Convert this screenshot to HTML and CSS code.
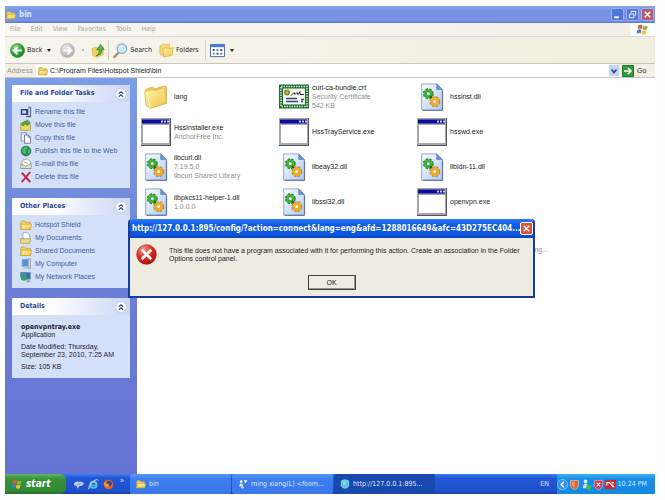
FILE: index.html
```html
<!DOCTYPE html>
<html lang="en">
<head>
<meta charset="utf-8">
<title>bin</title>
<link rel="stylesheet" href="styles.css">
</head>
<body>
<svg class="sprite" aria-hidden="true">
  <defs>
    <linearGradient id="gFold" x1="0" y1="0" x2="1" y2="1"><stop offset="0" stop-color="#fff6a8"/><stop offset="1" stop-color="#eec54a"/></linearGradient>
    <linearGradient id="gPage" x1="0" y1="0" x2="1" y2="1"><stop offset="0" stop-color="#ffffff"/><stop offset="1" stop-color="#a9c9f4"/></linearGradient>
    <radialGradient id="gGreen" cx=".35" cy=".3" r=".8"><stop offset="0" stop-color="#8fe08a"/><stop offset=".5" stop-color="#35a83a"/><stop offset="1" stop-color="#157a1e"/></radialGradient>
    <radialGradient id="gGray" cx=".35" cy=".3" r=".8"><stop offset="0" stop-color="#e8e8e6"/><stop offset="1" stop-color="#a9a9a8"/></radialGradient>
    <radialGradient id="gRed" cx=".35" cy=".25" r=".85"><stop offset="0" stop-color="#f79a86"/><stop offset=".5" stop-color="#da2c20"/><stop offset="1" stop-color="#a30f0f"/></radialGradient>
  </defs>
  <symbol id="folder" viewBox="0 0 16 16"><path d="M1 4.500 2 2.500h4.500l1.500 2h6v9.500H1z" fill="#f3cf5b" stroke="#c39a35" stroke-width=".9"/><path d="M2.500 7h13l-1.500 7H1z" fill="url(#gFold)" stroke="#c9a03a" stroke-width=".9"/></symbol>
  <symbol id="folder-big" viewBox="0 0 26 26"><path d="M2 6 9 3l3 2 10-3 2 1v17L8 25l-5-3z" fill="#efcb63" stroke="#d3a93e" stroke-width=".8"/><path d="M1 8l8-2 3 1 9-3 1 1 2 15L7 25l-4-2z" fill="url(#gFold)" stroke="#dbb54d" stroke-width=".7"/><path d="M1 8l3 2 3 15" fill="none" stroke="#fffbd6" stroke-width=".8"/></symbol>
  <symbol id="exe" viewBox="0 0 30 28"><path d="M0 0h30v28H0z" fill="#55555a"/><path d="M0 0h29v27H0z" fill="#a6a7ad"/><path d="M1 1.500h27v4H1z" fill="#0a0a9c"/><path d="M2 7h26v18H2z" fill="#fff"/><path d="M20 2.500h2v2h-2zM23 2.500h2v2h-2zM26 2.500h2v2h-2z" fill="#c9c9e8"/></symbol>
  <symbol id="dll" viewBox="0 0 24 30"><path d="M1 1h16l6 6v22H1z" fill="url(#gPage)" stroke="#8aa2c9"/><path d="M2 29.300h21.400V8" fill="none" stroke="#53698f"/><path d="M17 1v6h6z" fill="#5f95dc" stroke="#55759f" stroke-width=".6"/><circle cx="8" cy="11.500" r="4" fill="none" stroke="#257f24" stroke-width="3.600" stroke-dasharray="2.200 1"/><circle cx="8" cy="11.500" r="3.200" fill="none" stroke="#3fae3b" stroke-width="3.200"/><circle cx="8" cy="11.500" r="1.200" fill="#d9f3dc"/><path d="m10 14 3 3" stroke="#1d5a20" stroke-width="2"/><circle cx="15" cy="20" r="4" fill="none" stroke="#b97c20" stroke-width="3.600" stroke-dasharray="2.200 1"/><circle cx="15" cy="20" r="3.400" fill="none" stroke="#eeaa2a" stroke-width="3.200"/><circle cx="15" cy="20" r="1.400" fill="#fdf0cf"/></symbol>
  <symbol id="cert" viewBox="0 0 30 24"><path d="M0 0h30v24H0z" fill="#1f6b32"/><path d="M2 2h26v20H2z" fill="none" stroke="#cfe8cc" stroke-width="1.600" stroke-dasharray="1.500 1"/><path d="M4 4h22v16H4z" fill="#f6f9ea"/><circle cx="8" cy="8" r="3" fill="#8f8a33"/><circle cx="8" cy="8" r="1.200" fill="#c7bb5d"/><path d="M12 11l3-3 1 2 2-2 1 2 2-3v3h4" fill="none" stroke="#26304d" stroke-width="1"/><path d="M7 14h11M7 17h12M22 15h3M22 17h2" stroke="#3a3f86" stroke-width="1.300"/></symbol>
  <symbol id="chev" viewBox="0 0 12 12"><circle cx="6" cy="6" r="5.500" fill="#fff" stroke="#bcc8ec" stroke-width=".8"/><path d="m3.800 5.700 2.200-2 2.200 2M3.800 8.700l2.200-2 2.200 2" fill="none" stroke="#3c4f92" stroke-width="1.200"/></symbol>
  <symbol id="flag" viewBox="0 0 16 16"><path d="M3 3q2.500-2 5 0L7 7.500Q4.500 6 2 7.500z" fill="#e5562a"/><path d="M9 3.300q2.500 1.500 5.500 0L13.200 8Q10.500 9.300 8 7.700z" fill="#7fb93a"/><path d="M1.700 8.500q2.500-1.800 5 0L5.500 13Q3 11.500.5 13z" fill="#3f7fd6"/><path d="M7.700 8.800q2.500 1.500 5.200.2l-1.300 4.500Q9 15 6.500 13.300z" fill="#f4c22f"/></symbol>
  <symbol id="back" viewBox="0 0 16 16"><circle cx="8" cy="8" r="7.500" fill="url(#gGreen)" stroke="#2d8a33" stroke-width=".6"/><path d="M12.500 8H4.500M8 4 4 8l4 4" fill="none" stroke="#fff" stroke-width="2.200"/></symbol>
  <symbol id="fwd" viewBox="0 0 16 16"><circle cx="8" cy="8" r="7.500" fill="url(#gGray)" stroke="#a2a2a0" stroke-width=".6"/><path d="M3.500 8h8M8 4l4 4-4 4" fill="none" stroke="#fafafa" stroke-width="2.200"/></symbol>
  <symbol id="up" viewBox="0 0 16 16"><path d="M1 6 5 4l2 1 7-1v9l-8 3-4-2z" fill="#f3d25e" stroke="#d6b653" stroke-width=".8"/><path d="M6 14q4-2 3.500-7H6.500L11 1l4 6h-2.500q0 6-6.500 7z" fill="#4cb848" stroke="#217a26" stroke-width=".8"/></symbol>
  <symbol id="search" viewBox="0 0 16 16"><path d="m6.500 9.500-5 5.500" stroke="#a88d74" stroke-width="2.400" stroke-linecap="round"/><circle cx="9.500" cy="6" r="5" fill="#c9ebfa" stroke="#82aecb" stroke-width="1.400"/><path d="M6.500 5.500q1-2.500 3.500-2.500" stroke="#fff" stroke-width="1.300" fill="none"/></symbol>
  <symbol id="folders" viewBox="0 0 16 16"><path d="M1 3 5 1l2 1 4-1v9l-8 3-2-1z" fill="#f6d975" stroke="#dcb95a" stroke-width=".8"/><path d="m4 6 4-1 2 1 5-1-1 8-9 2z" fill="url(#gFold)" stroke="#d3ad4a" stroke-width=".8"/></symbol>
  <symbol id="views" viewBox="0 0 16 14"><path d="M.5.500h15v13H.5z" fill="#fff" stroke="#3f66b5"/><path d="M1 1h14v2.500H1z" fill="#4d7bd6"/><path d="M3 5.500h2v2H3zM11 5.500h2v2h-2zM7 9.500h2v2H7z" fill="#284b99"/><path d="M7 5.500h2v2H7zM3 9.500h2v2H3z" fill="#4e9a57"/><path d="M11 9.500h2v2h-2z" fill="#8b5a9c"/></symbol>
  <symbol id="rename" viewBox="0 0 16 16"><path d="M1 4h10v8H1z" fill="#31457c"/><path d="M3 6h5v4H3z" fill="#d6e2fb"/><path d="M11 2h3v12h-4" fill="none" stroke="#6e7796" stroke-width="1.800"/><path d="M8 14h6" stroke="#49588b" stroke-width="1.500"/></symbol>
  <symbol id="move" viewBox="0 0 16 16"><path d="M1 5h5l1 2h7v8H1z" fill="#f0d766" stroke="#94852f" stroke-width=".8"/><path d="M2 8q2-6 7-5V1l5 4-5 4V6Q6 6 5 9z" fill="#55a83d" stroke="#2b7425" stroke-width=".7"/></symbol>
  <symbol id="copy" viewBox="0 0 16 16"><path d="M1.500 1h7v11h-7z" fill="#e7f0ff" stroke="#6d7da6"/><path d="M6 4h5l3 3v8H6z" fill="#fff" stroke="#4d5d88"/><path d="M11 4v3h3" fill="none" stroke="#4d5d88"/></symbol>
  <symbol id="globe" viewBox="0 0 16 16"><circle cx="8" cy="8" r="6.500" fill="#2e8b72" stroke="#266056"/><path d="M3 6q2-4 6-4l1 3-3 2 1 3-2 2Q3 10 3 6zM11 6l3 1-1 4-2 1z" fill="#45c14a"/></symbol>
  <symbol id="mail" viewBox="0 0 16 16"><path d="M3 3 10 1l4 4v9H2z" fill="#f6f7ee" stroke="#8c9585"/><path d="m1 8 7 3 7-4v7H1z" fill="#d7e2d2" stroke="#71836f" stroke-width=".8"/><path d="m5 5 5 2" stroke="#b79b58"/></symbol>
  <symbol id="delete" viewBox="0 0 16 16"><path d="m3 3 10 11M13 2 3 14" stroke="#c5244b" stroke-width="2.600" stroke-linecap="round"/></symbol>
  <symbol id="docs" viewBox="0 0 16 16"><path d="M4 1h6l3 3v8H4z" fill="#fff" stroke="#8a96a8"/><path d="M1 9h13l-1 6H1z" fill="#efdc8a" stroke="#a8924b"/></symbol>
  <symbol id="pc" viewBox="0 0 16 16"><path d="M3 2h8v9H3z" fill="#4f93d8" stroke="#8797ac"/><path d="M11 1h3v13h-3z" fill="#c9d2de" stroke="#75849c" stroke-width=".7"/><path d="M4 14h8l-2-3H6z" fill="#b2bdcc"/></symbol>
  <symbol id="net" viewBox="0 0 16 16"><path d="M1 2h7v6H1z" fill="#3c8ccc" stroke="#57718e"/><path d="M7 2h7v9H7z" fill="#2d70bb" stroke="#8796a8"/><circle cx="5" cy="9" r="4" fill="#33a16a"/><path d="M8 15h6l-1-3H9z" fill="#9dacc0"/></symbol>
  <symbol id="error" viewBox="0 0 22 22"><circle cx="11" cy="11" r="10.300" fill="url(#gRed)" stroke="#a01512" stroke-width=".6"/><path d="m7 7 8 8M15 7l-8 8" stroke="#fff" stroke-width="2.800" stroke-linecap="square"/></symbol>
  <symbol id="cross" viewBox="0 0 12 12"><path d="m3 3 6 6M9 3 3 9" stroke="#fff" stroke-width="1.700"/></symbol>
  <symbol id="bird" viewBox="0 0 16 16"><path d="M1 7q3-4 6-3l6 0 3 3-3 3H9l-2 4-2-4-3-1z" fill="#b9cbe9"/><path d="m6 8 6-1" stroke="#7f8ca8"/></symbol>
  <symbol id="ie" viewBox="0 0 16 16"><circle cx="8" cy="8.500" r="4.500" fill="none" stroke="#5cc8f4" stroke-width="2.600"/><path d="M4 9h9" stroke="#5cc8f4" stroke-width="2"/><path d="M1 15Q0 9 7 4t8-2" fill="none" stroke="#f2ddb0" stroke-width="1.400"/></symbol>
  <symbol id="fox" viewBox="0 0 16 16"><circle cx="8" cy="8" r="7" fill="#e5671d"/><circle cx="9" cy="6.500" r="4" fill="#3f4c8e"/><path d="M1 5q3-1 4 2 3 0 4 2-1 3-5 2-3-2-3-6z" fill="#f79a2a"/></symbol>
  <symbol id="people" viewBox="0 0 16 16"><circle cx="5" cy="4" r="2.200" fill="#fff"/><path d="M2 12q0-5 3-5t3 5z" fill="#dbe8ff"/><path d="M9 2h6l-3 5z" fill="#fff"/><circle cx="7" cy="13" r="2" fill="#c5dfff"/></symbol>
  <symbol id="hss" viewBox="0 0 16 16"><path d="M2 3q6-4 12 0v8q-1 3-6 4-5-1-6-4z" fill="#58c5dc" stroke="#a9e5ef"/><path d="M5 5h5M5 8h4" stroke="#e8fbff"/></symbol>
</svg>

<div class="screen">
  <main class="window">
    <header class="titlebar">
      <svg class="ic10"><use href="#folder"/></svg>
      <h1>bin</h1>
      <div class="winbtns">
        <button aria-label="Minimize"><svg viewBox="0 0 12 12"><path d="M2.500 9h5" stroke="#fff" stroke-width="2"/></svg></button>
        <button aria-label="Restore"><svg viewBox="0 0 12 12"><path d="M4.500 4V2.500h5v4H8M2.500 5.500h5v4h-5z" fill="none" stroke="#fff"/></svg></button>
        <button class="close" aria-label="Close"><svg><use href="#cross"/></svg></button>
      </div>
    </header>

    <nav class="menubar">
      <button>File</button><button>Edit</button><button>View</button><button>Favorites</button><button>Tools</button><button>Help</button>
      <span class="brand"><svg><use href="#flag"/></svg></span>
    </nav>

    <div class="toolbar">
      <button class="tool back"><svg><use href="#back"/></svg>Back<i class="arrow"></i></button>
      <button class="tool fwd" aria-label="Forward"><svg><use href="#fwd"/></svg><i class="dot"></i></button>
      <button class="tool up" aria-label="Up"><svg><use href="#up"/></svg></button>
      <span class="sep"></span>
      <button class="tool"><svg><use href="#search"/></svg>Search</button>
      <button class="tool folders"><svg><use href="#folders"/></svg>Folders</button>
      <span class="sep"></span>
      <button class="tool" aria-label="Views"><svg><use href="#views"/></svg><i class="arrow"></i></button>
    </div>

    <form class="address">
      <label for="path">Address</label>
      <div class="field">
        <svg class="ic10"><use href="#folder"/></svg>
        <input id="path" type="text" value="C:\Program Files\Hotspot Shield\bin">
        <button type="button" class="drop" aria-label="History"><svg viewBox="0 0 10 10"><path d="m2.500 3.500 2.500 3 2.500-3" fill="none" stroke="#33426f" stroke-width="1.600"/></svg></button>
      </div>
      <button type="button" class="go"><svg viewBox="0 0 12 12"><path d="M.500.500h11v11H.500z" fill="#349a3c" stroke="#1c7b2a"/><path d="M2 6h7M6 3l3 3-3 3" fill="none" stroke="#fff" stroke-width="1.600"/></svg>Go</button>
    </form>

    <div class="content">
      <aside class="side">
        <section class="panel">
          <header><h2>File and Folder Tasks</h2><button aria-label="Collapse"><svg><use href="#chev"/></svg></button></header>
          <ul>
            <li><a href="#"><svg><use href="#rename"/></svg>Rename this file</a></li>
            <li><a href="#"><svg><use href="#move"/></svg>Move this file</a></li>
            <li><a href="#"><svg><use href="#copy"/></svg>Copy this file</a></li>
            <li><a href="#"><svg><use href="#globe"/></svg>Publish this file to the Web</a></li>
            <li><a href="#"><svg><use href="#mail"/></svg>E-mail this file</a></li>
            <li><a href="#"><svg><use href="#delete"/></svg>Delete this file</a></li>
          </ul>
        </section>
        <section class="panel">
          <header><h2>Other Places</h2><button aria-label="Collapse"><svg><use href="#chev"/></svg></button></header>
          <ul>
            <li><a href="#"><svg><use href="#folder"/></svg>Hotspot Shield</a></li>
            <li><a href="#"><svg><use href="#docs"/></svg>My Documents</a></li>
            <li><a href="#"><svg><use href="#folder"/></svg>Shared Documents</a></li>
            <li><a href="#"><svg><use href="#pc"/></svg>My Computer</a></li>
            <li><a href="#"><svg><use href="#net"/></svg>My Network Places</a></li>
          </ul>
        </section>
        <section class="panel">
          <header><h2>Details</h2><button aria-label="Collapse"><svg><use href="#chev"/></svg></button></header>
          <div class="details">
            <p><strong>openvpntray.exe</strong><br>Application</p>
            <p>Date Modified: Thursday,<br>September 23, 2010, 7:25 AM</p>
            <p>Size: 105 KB</p>
          </div>
        </section>
      </aside>

      <div class="files">
        <div class="file"><svg class="fold"><use href="#folder-big"/></svg><p>lang</p></div>
        <div class="file"><svg class="cert"><use href="#cert"/></svg><p>curl-ca-bundle.crt<small>Security Certificate</small><small>542 KB</small></p></div>
        <div class="file"><svg><use href="#dll"/></svg><p>hssinst.dll</p></div>
        <div class="file"><svg><use href="#exe"/></svg><p>HssInstaller.exe<small>AnchorFree Inc.</small></p></div>
        <div class="file"><svg><use href="#exe"/></svg><p>HssTrayService.exe</p></div>
        <div class="file"><svg><use href="#exe"/></svg><p>hsswd.exe</p></div>
        <div class="file"><svg><use href="#dll"/></svg><p>libcurl.dll<small>7.19.5.0</small><small>libcurl Shared Library</small></p></div>
        <div class="file"><svg><use href="#dll"/></svg><p>libeay32.dll</p></div>
        <div class="file"><svg><use href="#dll"/></svg><p>libidn-11.dll</p></div>
        <div class="file"><svg><use href="#dll"/></svg><p>libpkcs11-helper-1.dll<small>1.0.0.0</small></p></div>
        <div class="file"><svg><use href="#dll"/></svg><p>libssl32.dll</p></div>
        <div class="file"><svg><use href="#exe"/></svg><p>openvpn.exe</p></div>
        <div class="file tail"><p><small>ng...</small></p></div>
      </div>
    </div>
  </main>

  <div class="dialog" role="alertdialog" aria-labelledby="dlg-title">
    <header><h2 id="dlg-title">http://127.0.0.1:895/config/?action=connect&amp;lang=eng&amp;afd=1288016649&amp;afc=43D275EC404...</h2><button class="close" aria-label="Close"><svg><use href="#cross"/></svg></button></header>
    <div class="message"><svg><use href="#error"/></svg><p>This file does not have a program associated with it for performing this action. Create an association in the Folder<br>Options control panel.</p></div>
    <button class="ok">OK</button>
  </div>

  <footer class="taskbar">
    <button class="start"><svg><use href="#flag"/></svg>start</button>
    <div class="quick">
      <button aria-label="Messenger"><svg><use href="#bird"/></svg></button>
      <button aria-label="Internet Explorer"><svg><use href="#ie"/></svg></button>
      <button aria-label="Firefox"><svg><use href="#fox"/></svg></button>
      <span>»</span>
    </div>
    <button class="task"><svg><use href="#folder"/></svg>bin</button>
    <button class="task"><svg><use href="#people"/></svg>ming xiang(L) &lt;foom...</button>
    <button class="task active"><svg><use href="#hss"/></svg>http://127.0.0.1:895...</button>
    <span class="lang">EN</span>
    <div class="tray">
      <svg viewBox="0 0 12 12"><circle cx="6" cy="6" r="5.500" fill="#2f8fe8" stroke="#9bd0ff" stroke-width=".8"/><path d="M7.500 3 4.500 6l3 3" fill="none" stroke="#fff" stroke-width="1.700"/></svg>
      <svg viewBox="0 0 12 12"><path d="M1.500 1.500h9V6q0 4-4.500 5.500Q1.500 10 1.500 6z" fill="#d9663c" stroke="#f0c4aa" stroke-width=".8"/><path d="M3 3h3v6Q3 8 3 5z" fill="#f09a70"/></svg>
      <svg viewBox="0 0 12 12"><circle cx="5" cy="2.500" r="2" fill="#e6f4ff"/><path d="M2 10q0-5 3-5t3 5z" fill="#c2e4fb"/><circle cx="8.500" cy="9" r="2.800" fill="#4db83c"/></svg>
      <svg viewBox="0 0 12 12"><path d="M1.500 1.500h9V6q0 4-4.500 5.500Q1.500 10 1.500 6z" fill="#d8303c" stroke="#efb0b6" stroke-width=".8"/><path d="m4 4 4 4M8 4 4 8" stroke="#fff" stroke-width="1.200"/></svg>
      <svg viewBox="0 0 12 12"><path d="M0 1h12v10H0z" fill="#cf2a2a"/><path d="M2 7V4h3l4 5M7 4h3M8 6l2 3" fill="none" stroke="#fff" stroke-width="1.200"/></svg>
      <time>10:24 PM</time>
    </div>
  </footer>
</div>
</body>
</html>
```
FILE: styles.css
```css
* { box-sizing: border-box; }

body {
  margin: 0;
  background: #fefefe;
  color: #222;
  font: 7px/9px "Liberation Sans", Arial, sans-serif;
}

h1, h2, p, ul { margin: 0; padding: 0; }
ul { list-style: none; }
a { color: inherit; text-decoration: none; }
svg { display: block; flex: none; }
.sprite { position: absolute; width: 0; height: 0; }

button, input {
  margin: 0;
  padding: 0;
  border: 0;
  background: none;
  color: inherit;
  font: inherit;
}

.screen {
  position: relative;
  display: flex;
  flex-direction: column;
  min-height: 100vh;
  padding: 6px 10px 6px 5px;
}

.window { display: flex; flex: 1; flex-direction: column; }

.ic10 { width: 10px; height: 10px; }

.titlebar {
  display: flex;
  align-items: center;
  height: 17px;
  padding: 0 1px;
  gap: 3px;
  background: linear-gradient(#86a7ee, #7592e2 30%, #7795e4 85%, #5f78c4);
}
.titlebar h1 { flex: 1; color: #dfe8fc; font: bold 8px/12px "DejaVu Sans Condensed", sans-serif; }
.winbtns { display: flex; gap: 2px; }
.winbtns button { width: 13px; height: 13px; border: 1px solid #9db2ee; border-radius: 2px; background: #5076dc; }
.winbtns svg { width: 11px; height: 11px; }
.winbtns .close { background: #b9586c; }

.menubar {
  display: flex;
  height: 14px;
  padding-left: 5px;
  gap: 10px;
  border-bottom: 1px solid #dcd9d0;
  background: linear-gradient(90deg, #f7f6f0, #f6f0ea 70%, #f2eee4);
  color: #aaa8a3;
}
.brand { display: flex; justify-content: center; width: 25px; margin-left: auto; background: #fff; }
.brand svg { width: 13px; height: 13px; }

.menubar, .toolbar { font: 7px/9px "DejaVu Sans Condensed", sans-serif; }

.toolbar {
  display: flex;
  align-items: center;
  height: 27px;
  padding-left: 5px;
  border-bottom: 1px solid #c8c6bf;
  background: linear-gradient(90deg, #f6f4ec, #f2eedf);
}
.tool { display: flex; align-items: center; gap: 2px; }
.tool svg { width: 15px; height: 15px; }
.tool.back { margin-right: 9px; }
.tool.fwd { gap: 7px; margin-right: 7px; }
.tool.up svg { width: 14px; }
.tool.folders { margin: 0 3px 0 7px; }
.arrow { margin-left: 3px; border: 2px solid transparent; border-top: 3px solid #222; border-bottom: 0; }
.dot { width: 2px; height: 2px; background: #bbb; }
.sep { width: 1px; height: 20px; margin: 0 4px 0 3px; background: #d3d0c5; }

.address { display: flex; align-items: center; height: 14px; border-bottom: 1px solid #c8c6bf; background: #f2efe4; }
.address label { width: 31px; padding-left: 2px; color: #999791; }
.field { display: flex; flex: 1; align-items: center; height: 13px; padding-left: 2px; gap: 2px; background: #fff; }
.field input { flex: 1; min-width: 0; height: 11px; outline: 0; }
.drop { width: 10px; height: 11px; background: #c5d3f8; }
.drop svg { width: 10px; height: 10px; }
.go { display: flex; align-items: center; width: 36px; padding-left: 3px; gap: 3px; }
.go svg { width: 12px; height: 12px; }

.content { display: flex; flex: 1; }

.side {
  display: flex;
  flex-direction: column;
  flex: none;
  width: 132px;
  padding: 7px;
  gap: 10px;
  background: linear-gradient(#7b9ee4, #6a7bd6 60%, #6573d4);
}
.panel { background: #d4dff8; color: #42619f; }
.panel header {
  display: flex;
  align-items: center;
  justify-content: space-between;
  height: 17px;
  padding: 0 3px 0 8px;
  border-radius: 3px 3px 0 0;
  background: linear-gradient(90deg, #fdfdff 35%, #c9d6f6);
}
.panel h2 { color: #2b4a91; font: bold 7px/9px "DejaVu Sans Condensed", sans-serif; }
.panel header svg { width: 12px; height: 12px; }
.panel ul { padding: 3px 0 5px 8px; }
.panel li a { display: flex; align-items: center; height: 13px; gap: 3px; }
.panel li svg { width: 12px; height: 12px; }
.details { padding: 8px 9px 7px; color: #223; line-height: 8px; }
.details strong { font-family: "DejaVu Sans Condensed", sans-serif; }
.details p + p { margin-top: 4px; }

.files {
  display: grid;
  flex: 1;
  grid-template-columns: repeat(3, 138px);
  grid-auto-rows: 35px;
  align-content: start;
  padding: 1px 0 0 4px;
  background: #fff;
}
.file { display: flex; align-items: center; gap: 3px; }
.file svg { width: 30px; height: 28px; }
.file .fold, .file .cert { height: 25px; }
.file p { white-space: nowrap; }
.file small { display: block; color: #8d8d8d; font-size: 7px; line-height: 9px; }
.tail { grid-column: 3; align-items: flex-end; justify-content: flex-end; padding-right: 7px; }

.dialog {
  position: absolute;
  top: 219px;
  left: 128px;
  width: 407px;
  height: 79px;
  border: 2px solid #173a9e;
  border-top: 0;
  border-radius: 4px 4px 0 0;
  background: #eeebe0;
}
.dialog header {
  display: flex;
  align-items: center;
  justify-content: space-between;
  height: 19px;
  padding: 0 2px;
  border-radius: 3px 3px 0 0;
  background: linear-gradient(#2a7cf4, #0f5be6 30%, #0e57e0 80%, #0a45bd);
}
.dialog h2 { color: #fff; font: bold 8px/12px "DejaVu Sans Condensed", sans-serif; white-space: nowrap; }
.dialog .close { width: 13px; height: 13px; border: 1px solid #fff; border-radius: 2px; background: #dc5034; }
.dialog .close svg { width: 11px; height: 11px; }
.message { display: flex; align-items: flex-start; padding: 6px 6px 0; gap: 12px; }
.message svg { width: 21px; height: 21px; }
.message p { padding-top: 3px; line-height: 8px; white-space: nowrap; }
.ok { display: block; width: 48px; height: 15px; margin: 10px auto 0; border: 1px solid #45423b; box-shadow: inset -1px -1px #9a968a; }

.taskbar {
  display: flex;
  align-items: stretch;
  height: 20px;
  background: linear-gradient(#3d7df0, #2157d7 20%, #1f50cc 85%, #173fa6);
  color: #dce8ff;
}
.start {
  display: flex;
  align-items: center;
  width: 61px;
  padding-left: 6px;
  gap: 3px;
  border-radius: 0 6px 6px 0;
  background: linear-gradient(#62b45c, #36913a 25%, #318c36 80%, #236f2a);
  color: #fff;
  font: italic bold 10px/12px "DejaVu Sans Condensed", sans-serif;
}
.start svg { width: 12px; height: 12px; }
.quick { display: flex; align-items: center; width: 64px; padding-left: 7px; gap: 4px; }
.quick svg { width: 11px; height: 11px; }
.quick span { margin: -8px 0 0 2px; }
.task {
  display: flex;
  align-items: center;
  width: 101px;
  margin-right: 1px;
  padding-left: 6px;
  gap: 3px;
  border-radius: 2px;
  background: linear-gradient(#5c97f8, #3e7ef0 25%, #3a77e8);
  white-space: nowrap;
}
.task svg { width: 10px; height: 10px; }
.task.active { background: #1a48ae; }
.taskbar .task, .tray, .lang { font-family: "DejaVu Sans Condensed", sans-serif; }
.lang { margin-left: auto; padding-right: 8px; line-height: 20px; }
.tray { display: flex; align-items: center; width: 98px; gap: 1px; background: linear-gradient(#3fb0f6, #178ee8 25%, #1589e2); }
.tray svg { width: 11px; height: 11px; }
.tray time { margin-left: auto; padding-right: 8px; white-space: nowrap; }
```
